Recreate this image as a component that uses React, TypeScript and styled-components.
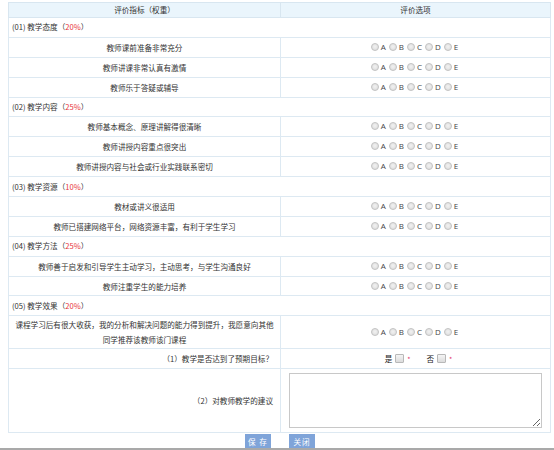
import styled, { createGlobalStyle } from "styled-components";

const GlobalStyle = createGlobalStyle`
  html, body {
    margin: 0;
    padding: 0;
    background: #ffffff;
  }
  body {
    font-family: "Noto Sans CJK SC", "Noto Sans", sans-serif;
    font-size: 7.6px;
    color: #333333;
    height: 450px;
    overflow: hidden;
  }
`;

type Item = { text: string; tall?: boolean };
type Section = { title: string; weight: string; items: Item[] };

const sections: Section[] = [
  {
    title: "(01) 教学态度",
    weight: "20%",
    items: [
      { text: "教师课前准备非常充分" },
      { text: "教师讲课非常认真有激情" },
      { text: "教师乐于答疑或辅导" },
    ],
  },
  {
    title: "(02) 教学内容",
    weight: "25%",
    items: [
      { text: "教师基本概念、原理讲解得很清晰" },
      { text: "教师讲授内容重点很突出" },
      { text: "教师讲授内容与社会或行业实践联系密切" },
    ],
  },
  {
    title: "(03) 教学资源",
    weight: "10%",
    items: [
      { text: "教材或讲义很适用" },
      { text: "教师已搭建网络平台，网络资源丰富，有利于学生学习" },
    ],
  },
  {
    title: "(04) 教学方法",
    weight: "25%",
    items: [
      { text: "教师善于启发和引导学生主动学习，主动思考，与学生沟通良好" },
      { text: "教师注重学生的能力培养" },
    ],
  },
  {
    title: "(05) 教学效果",
    weight: "20%",
    items: [
      {
        text: "课程学习后有很大收获，我的分析和解决问题的能力得到提升，我愿意向其他同学推荐该教师该门课程",
        tall: true,
      },
    ],
  },
];

const options = ["A", "B", "C", "D", "E"];

const Page = styled.div`
  padding: 2px 4px 0 8px;
`;

const Table = styled.table`
  width: 542px;
  border-collapse: collapse;
  table-layout: fixed;
  border: 1px solid #dde9f2;
`;

const HeadCell = styled.th`
  height: 14px;
  padding: 0;
  background: #eaf5fc;
  border: 1px solid #d8e6f0;
  font-weight: normal;
  text-align: center;
  line-height: 14px;
`;

const SectionCell = styled.td`
  height: 18.9px;
  padding: 0 0 0 3px;
  border: 1px solid #dde9f2;
  text-align: left;
  line-height: 18px;
`;

const Weight = styled.span`
  color: #e8333a;
`;

const ItemCell = styled.td<{ $align?: "center" | "right"; $h?: number; $pad?: number }>`
  height: ${(p) => p.$h ?? 18.9}px;
  padding: 0 ${(p) => p.$pad ?? 14}px;
  border: 1px solid #dde9f2;
  text-align: ${(p) => p.$align ?? "center"};
  line-height: 15px;
  vertical-align: middle;
`;

const OptionCell = styled.td`
  padding: 0;
  border: 1px solid #dde9f2;
  text-align: center;
  vertical-align: middle;
  line-height: 10px;
`;

const RadioGroup = styled.div`
  display: inline-flex;
  align-items: center;
  gap: 3px;
  margin-left: -2px;
`;

const RadioLabel = styled.label`
  display: inline-flex;
  align-items: center;
  gap: 2px;
  font-family: "Open Sans", "DejaVu Sans", sans-serif;
  font-size: 8px;
  color: #444;
`;

const Radio = styled.span`
  width: 8px;
  height: 8px;
  border-radius: 50%;
  border: 1px solid #c4c4c4;
  background: radial-gradient(circle at 50% 45%, #f2f2f2 0%, #d8d8d8 100%);
  box-sizing: border-box;
`;

const CheckGroup = styled.div`
  display: inline-flex;
  align-items: center;
  gap: 16px;
  margin-left: 6px;
`;

const CheckLabel = styled.label`
  display: inline-flex;
  align-items: center;
  gap: 3px;
  color: #222;
`;

const Box = styled.span`
  width: 7px;
  height: 7px;
  border: 1px solid #b8b8b8;
  background: linear-gradient(#f4f4f4, #dcdcdc);
  border-radius: 1px;
`;

const Star = styled.span`
  color: #e0336a;
  font-size: 7px;
`;

const TextArea = styled.textarea`
  display: block;
  width: 253px;
  height: 55px;
  margin: 0 0 0 8px;
  border: 1px solid #c8c8c8;
  box-sizing: border-box;
  resize: both;
  font-family: inherit;
`;

const Buttons = styled.div`
  display: flex;
  justify-content: center;
  gap: 18px;
  padding: 1px 0 0 2px;
`;

const Button = styled.button`
  width: 26px;
  height: 15px;
  padding: 0;
  border: none;
  background: #7fa4d9;
  color: #ffffff;
  font-family: "Noto Sans CJK SC", sans-serif;
  font-size: 7.6px;
  letter-spacing: 1px;
`;

const BottomLine = styled.div`
  position: fixed;
  left: 0;
  right: 0;
  bottom: 0;
  height: 2px;
  background: #a9a9a9;
`;

const Options = () => (
  <RadioGroup>
    {options.map((o) => (
      <RadioLabel key={o}>
        <Radio />
        {o}
      </RadioLabel>
    ))}
  </RadioGroup>
);

export default function App() {
  return (
    <>
      <GlobalStyle />
      <Page>
        <Table>
          <colgroup>
            <col style={{ width: "272px" }} />
            <col style={{ width: "270px" }} />
          </colgroup>
          <thead>
            <tr>
              <HeadCell>评价指标（权重）</HeadCell>
              <HeadCell>评价选项</HeadCell>
            </tr>
          </thead>
          <tbody>
            {sections.map((s) => (
              <>
                <tr key={s.title}>
                  <SectionCell colSpan={2}>
                    {s.title}（<Weight>{s.weight}</Weight>）
                  </SectionCell>
                </tr>
                {s.items.map((it) => (
                  <tr key={it.text}>
                    <ItemCell $h={it.tall ? 31.9 : 18.9} $pad={it.tall ? 4 : 14}>
                      {it.text}
                    </ItemCell>
                    <OptionCell>
                      <Options />
                    </OptionCell>
                  </tr>
                ))}
              </>
            ))}
            <tr>
              <ItemCell $align="right" $pad={7}>
                （1）教学是否达到了预期目标？
              </ItemCell>
              <OptionCell>
                <CheckGroup>
                  <CheckLabel>
                    是<Box />
                    <Star>*</Star>
                  </CheckLabel>
                  <CheckLabel>
                    否<Box />
                    <Star>*</Star>
                  </CheckLabel>
                </CheckGroup>
              </OptionCell>
            </tr>
            <tr>
              <ItemCell $align="right" $h={63} $pad={7}>
                （2）对教师教学的建议
              </ItemCell>
              <OptionCell>
                <TextArea />
              </OptionCell>
            </tr>
          </tbody>
        </Table>
        <Buttons>
          <Button>保 存</Button>
          <Button>关闭</Button>
        </Buttons>
      </Page>
      <BottomLine />
    </>
  );
}
